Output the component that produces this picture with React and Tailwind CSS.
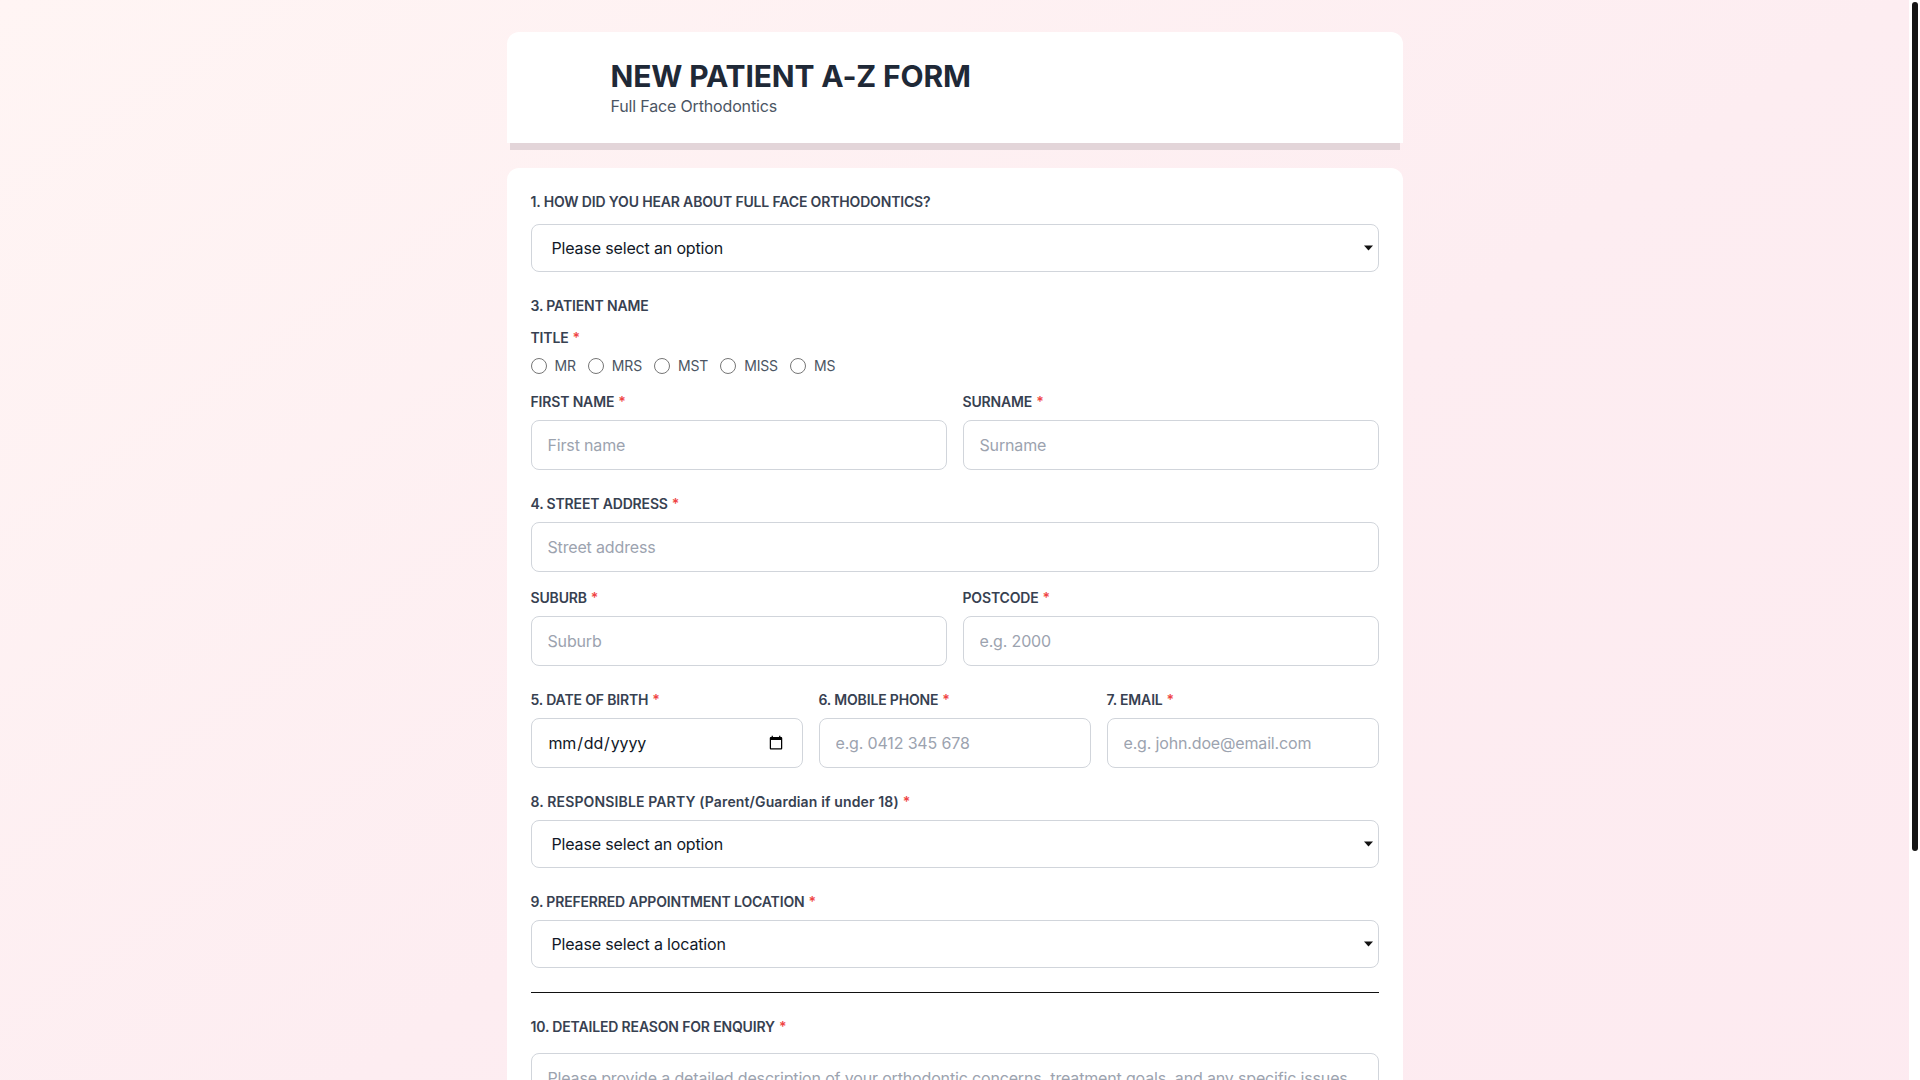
import React from "react";

function Label({ children, required, className = "mb-2" }) {
  return (
    <label className={`block text-sm font-semibold text-[#374151] uppercase leading-5 ${className}`}>
      {children}
      {required && <span className="text-[#ef4444] ml-1">*</span>}
    </label>
  );
}

const inputCls =
  "block w-full h-[50px] px-4 py-3 text-base leading-6 text-[#111827] bg-white border border-[#d1d5db] rounded-lg placeholder:text-[#9ca3af] outline-none";

function Select({ children }) {
  return (
    <div className="relative">
      <select
        className="block w-full h-12 pl-[20px] pr-8 text-base text-[#111827] bg-white border border-[#d1d5db] rounded-lg outline-none appearance-none"
        defaultValue=""
      >
        {children}
      </select>
      <svg
        className="pointer-events-none absolute right-[6px] top-1/2 -translate-y-1/2"
        width="9"
        height="6"
        viewBox="0 0 9 6"
      >
        <path d="M0 0.5 H9 L4.5 5.5 Z" fill="#111" />
      </svg>
    </div>
  );
}

export default function App() {
  return (
    <div className="flex h-screen">
      <div className="flex-1 overflow-y-auto [scrollbar-width:none]">
        <div className="min-h-full bg-linear-to-br from-[#fff5f4] via-[#fdedf1] to-[#fdeaf0] py-8 px-4 font-['Inter','Noto_Sans',sans-serif] tracking-[-0.01em]">
          <div className="max-w-4xl mx-auto">
            <div className="bg-white rounded-t-xl px-6 pt-[26px] pb-[25px] flex items-center gap-4">
              <div className="w-16 h-14 shrink-0" />
              <div>
                <h1 className="text-3xl leading-9 font-bold text-[#1f2937]">NEW PATIENT A-Z FORM</h1>
                <p className="text-base leading-6 text-[#4b5563]">Full Face Orthodontics</p>
              </div>
            </div>
            <div className="h-[7px] mx-[3px] bg-[#e3d5d9]" />

            <div className="mt-[18px] bg-white rounded-xl p-6 pb-8">
              <div className="mb-6">
                <Label className="mb-3">1. How did you hear about Full Face Orthodontics?</Label>
                <Select>
                  <option value="">Please select an option</option>
                  <option>Google</option>
                  <option>Friend / Family</option>
                  <option>Dentist referral</option>
                  <option>Social media</option>
                </Select>
              </div>

              <Label className="mb-3">3. Patient Name</Label>
              <div className="mb-4">
                <Label required>Title</Label>
                <div className="flex items-center gap-3 h-5">
                  {["MR", "MRS", "MST", "MISS", "MS"].map((t) => (
                    <label key={t} className="flex items-center gap-2 text-sm text-[#4b5563]">
                      <input type="radio" name="title" className="w-4 h-4 m-0" />
                      {t}
                    </label>
                  ))}
                </div>
              </div>

              <div className="grid grid-cols-2 gap-4 mb-6">
                <div>
                  <Label required>First Name</Label>
                  <input className={inputCls} placeholder="First name" />
                </div>
                <div>
                  <Label required>Surname</Label>
                  <input className={inputCls} placeholder="Surname" />
                </div>
              </div>

              <div className="mb-4">
                <Label required>4. Street Address</Label>
                <input className={inputCls} placeholder="Street address" />
              </div>

              <div className="grid grid-cols-2 gap-4 mb-6">
                <div>
                  <Label required>Suburb</Label>
                  <input className={inputCls} placeholder="Suburb" />
                </div>
                <div>
                  <Label required>Postcode</Label>
                  <input className={inputCls} placeholder="e.g. 2000" />
                </div>
              </div>

              <div className="grid grid-cols-3 gap-4 mb-6">
                <div>
                  <Label required>5. Date of Birth</Label>
                  <input type="date" className={inputCls} />
                </div>
                <div>
                  <Label required>6. Mobile Phone</Label>
                  <input className={inputCls} placeholder="e.g. 0412 345 678" />
                </div>
                <div>
                  <Label required>7. Email</Label>
                  <input className={inputCls} placeholder="e.g. john.doe@email.com" />
                </div>
              </div>

              <div className="mb-6">
                <label className="block text-sm font-semibold text-[#374151] leading-5 mb-2 tracking-[0.01em]">
                  8. RESPONSIBLE PARTY (Parent/Guardian if under 18)
                  <span className="text-[#ef4444] ml-1">*</span>
                </label>
                <Select>
                  <option value="">Please select an option</option>
                  <option>Self</option>
                  <option>Parent</option>
                  <option>Guardian</option>
                </Select>
              </div>

              <div className="mb-6">
                <Label required>9. Preferred Appointment Location</Label>
                <Select>
                  <option value="">Please select a location</option>
                </Select>
              </div>

              <hr className="mb-6 border-t border-[#111]" />

              <div className="mb-6">
                <Label required className="mb-4">10. Detailed Reason for Enquiry</Label>
                <textarea
                  rows={5}
                  className="block w-full px-4 py-3 text-base leading-6 text-[#111827] bg-white border border-[#d1d5db] rounded-lg placeholder:text-[#9ca3af] outline-none resize-y"
                  placeholder="Please provide a detailed description of your orthodontic concerns, treatment goals, and any specific issues..."
                />
              </div>

              <button className="w-full h-12 rounded-lg bg-[#1f2937] text-white font-semibold text-base">
                Submit Form
              </button>
            </div>
          </div>
        </div>
      </div>
      <div className="w-[11px] shrink-0 bg-white pl-[3px] pr-[2px] pt-[2px]">
        <div className="h-[849px] rounded-t-full rounded-b-full bg-[#141414]" />
      </div>
    </div>
  );
}
